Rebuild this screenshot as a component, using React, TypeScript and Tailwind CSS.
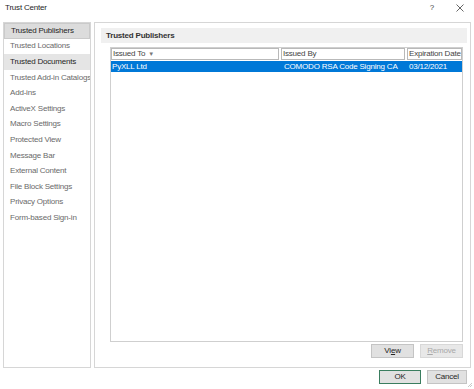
import React from 'react';

const navItems = [
  'Trusted Publishers',
  'Trusted Locations',
  'Trusted Documents',
  'Trusted Add-in Catalogs',
  'Add-ins',
  'ActiveX Settings',
  'Macro Settings',
  'Protected View',
  'Message Bar',
  'External Content',
  'File Block Settings',
  'Privacy Options',
  'Form-based Sign-in',
];

// 左侧导航项
const NavItem = ({ label, index }: { label: string; index: number }) => {
  const selected = index === 0;
  const hover = index === 2;
  let cls = 'text-[#6a6a6a]';
  if (selected) cls = 'bg-[#dcdcdc] text-[#262626] border border-[#cacaca]';
  if (hover) cls = 'bg-[#e5e5e5] text-[#262626]';
  return (
    <div className={`h-[15.6px] flex items-center pl-[6px] whitespace-nowrap ${cls}`}>{label}</div>
  );
};

export default function App() {
  return (
    <div
      className="w-[474px] h-[389px] bg-white relative overflow-hidden text-[8px] leading-none tracking-[-0.2px] text-[#262626] whitespace-nowrap"
      style={{ fontFamily: '"Liberation Sans", Arial, sans-serif' }}
    >
      {/* 标题栏 */}
      <div className="h-[22px] flex items-center pl-[5px] pr-[8px]">
        <span className="flex-1 -mt-[6px]">Trust Center</span>
        <span className="text-[#444] mr-[22px] -mt-[6px]">?</span>
        <svg width="8" height="8" viewBox="0 0 8 8" className="-mt-[6px] mr-[2px]">
          <path d="M0.5 0.5 L7.5 7.5 M7.5 0.5 L0.5 7.5" stroke="#555" strokeWidth="0.9" />
        </svg>
      </div>

      {/* 主体 */}
      <div className="flex pl-[3px] gap-[3px]">
        <div className="w-[88px] h-[346px] border border-[#d6d6d6] overflow-hidden">
          {navItems.map((item, i) => (
            <NavItem key={item} label={item} index={i} />
          ))}
        </div>

        <div className="w-[377px] h-[346px] border border-[#d6d6d6] pl-[6px] pr-[3px] pt-[5px]">
          <div className="h-[15px] bg-[#f0f0f0] flex items-center pl-[5px] font-bold text-[#333]">
            Trusted Publishers
          </div>
          <div className="ml-[9px] mt-[4px] w-[353px] h-[295px] border border-[#cfcfcf]">
            <div className="flex h-[12px] gap-[2px]">
              <div className="w-[168px] border border-[#b9b9b9] flex items-center pl-[1px] text-[#444]">
                Issued To
                <span className="ml-[3px] text-[6px] text-[#777]">▼</span>
              </div>
              <div className="w-[124px] border border-[#b9b9b9] flex items-center pl-[1px] text-[#444]">
                Issued By
              </div>
              <div className="flex-1 border border-[#b9b9b9] flex items-center pl-[1px] text-[#444]">
                Expiration Date
              </div>
            </div>
            <div className="flex h-[11px] mt-[1px] bg-[#0078d7] text-white items-center">
              <div className="w-[170px] pl-[1px]">PyXLL Ltd</div>
              <div className="w-[126px] pl-[3px]">COMODO RSA Code Signing CA</div>
              <div className="flex-1 pl-[2px]">03/12/2021</div>
            </div>
          </div>
          <div className="flex justify-end gap-[6px] mt-[2px] mr-[4px]">
            <div className="w-[43px] h-[14px] bg-[#e1e1e1] border border-[#c4c4c4] flex items-center justify-center">
              <span>
                Vi<span className="underline">e</span>w
              </span>
            </div>
            <div className="w-[43px] h-[14px] bg-[#e8e8e8] border border-[#d8d8d8] flex items-center justify-center text-[#a8a8a8]">
              <span>
                <span className="underline">R</span>emove
              </span>
            </div>
          </div>
        </div>
      </div>

      {/* 底部按钮 */}
      <div className="flex justify-end gap-[6px] mt-[2px] pr-[7px]">
        <div className="w-[42px] h-[14px] bg-[#e1e1e1] border border-[#3a7d5f] flex items-center justify-center">
          OK
        </div>
        <div className="w-[40px] h-[14px] bg-[#e1e1e1] border border-[#c4c4c4] flex items-center justify-center">
          Cancel
        </div>
      </div>
      <svg width="6" height="6" viewBox="0 0 6 6" className="absolute right-[1px] bottom-[1px]">
        <path d="M5 1 L1 5 M5 3 L3 5" stroke="#bbb" strokeWidth="0.8" />
      </svg>
    </div>
  );
}
